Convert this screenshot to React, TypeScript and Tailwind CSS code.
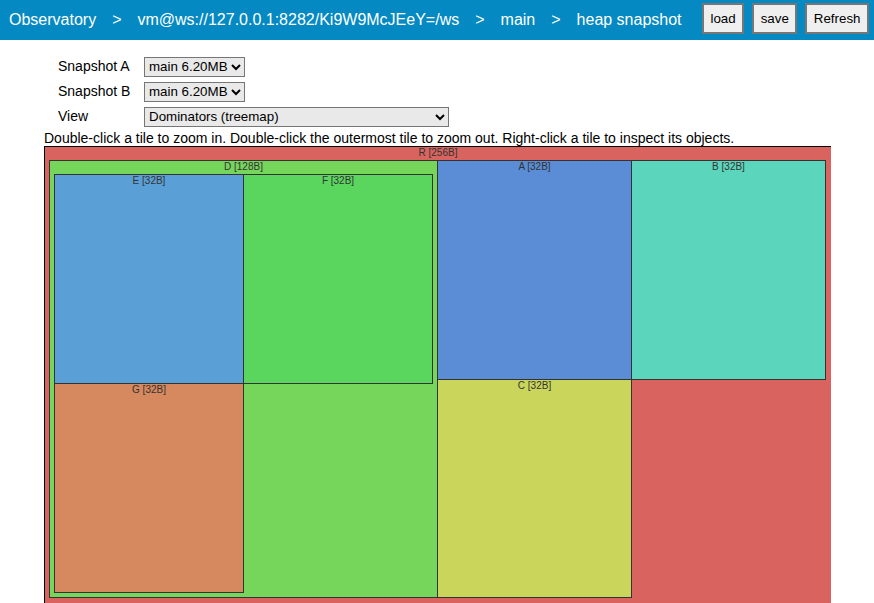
import React from 'react';

type Tile = { label: string; x: number; y: number; w: number; h: number; bg: string; root?: boolean };

// positions relative to the treemap canvas (page x 44, y 146)
const tiles: Tile[] = [
  { label: 'R [256B]', x: 0, y: 0, w: 787, h: 460, bg: 'bg-[#d9645f]', root: true },
  { label: 'D [128B]', x: 5, y: 14, w: 389, h: 438, bg: 'bg-[#76d55b]' },
  { label: 'E [32B]', x: 10, y: 28, w: 190, h: 210, bg: 'bg-[#5a9fd5]' },
  { label: 'F [32B]', x: 199, y: 28, w: 190, h: 210, bg: 'bg-[#5ad65f]' },
  { label: 'G [32B]', x: 10, y: 237, w: 190, h: 210, bg: 'bg-[#d6885e]' },
  { label: 'A [32B]', x: 393, y: 14, w: 195, h: 220, bg: 'bg-[#5b8dd6]' },
  { label: 'B [32B]', x: 587, y: 14, w: 195, h: 220, bg: 'bg-[#5bd5bb]' },
  { label: 'C [32B]', x: 393, y: 233, w: 195, h: 219, bg: 'bg-[#c9d65b]' },
];

const Crumb = ({ children }: { children: React.ReactNode }) => (
  <span className="px-2">{children}</span>
);

export default function App() {
  return (
    <div className="w-[874px] h-[603px] overflow-hidden bg-white text-black font-['Liberation_Sans',Arial,sans-serif]">
      {/* nav bar */}
      <div className="h-10 bg-[#0489c2] flex items-center justify-between pl-[1px] pr-[5px] text-white text-[16px]">
        <div className="flex items-center -mt-[1px]">
          <Crumb>Observatory</Crumb>
          <Crumb>&gt;</Crumb>
          <Crumb>vm@ws://127.0.0.1:8282/Ki9W9McJEeY=/ws</Crumb>
          <Crumb>&gt;</Crumb>
          <Crumb>main</Crumb>
          <Crumb>&gt;</Crumb>
          <Crumb>heap snapshot</Crumb>
        </div>
        <div className="flex items-center gap-2 -mt-[3px]">
          {['load', 'save', 'Refresh'].map((b) => (
            <button
              key={b}
              className="h-[31px] px-[6.5px] border-2 border-[#767676] bg-[#efefef] text-black text-[13.33px] leading-none"
            >
              {b}
            </button>
          ))}
        </div>
      </div>

      <div className="pl-[44px]">
        {/* snapshot form */}
        <div className="grid grid-cols-[86px_auto] auto-rows-[25px] items-center pl-[14px] pt-[14px] text-[14px]">
          <span>Snapshot A</span>
          <div>
            <select className="w-[101px] h-[20px] text-[13.33px] bg-[#e9e9e9] border border-[#767676] text-black">
              <option>main 6.20MB</option>
            </select>
          </div>
          <span>Snapshot B</span>
          <div>
            <select className="w-[101px] h-[20px] text-[13.33px] bg-[#e9e9e9] border border-[#767676] text-black">
              <option>main 6.20MB</option>
            </select>
          </div>
          <span>View</span>
          <div>
            <select className="w-[305px] h-[20px] text-[13.33px] bg-[#e9e9e9] border border-[#767676] text-black">
              <option>Dominators (treemap)</option>
            </select>
          </div>
        </div>

        <div className="text-[14px] leading-[16px] mt-[1px]">
          Double-click a tile to zoom in. Double-click the outermost tile to zoom out. Right-click a tile to inspect its objects.
        </div>

        {/* treemap */}
        <div className="relative w-[787px] h-[460px]">
          {tiles.map((t) => (
            <div
              key={t.label}
              className={`absolute ${t.bg} ${t.root ? 'border-l border-t border-black' : 'border border-[#333333]'}`}
              style={{ left: t.x, top: t.y, width: t.w, height: t.h }}
            >
              <div className="text-center text-[10px] leading-[12px] text-[#333333]">{t.label}</div>
            </div>
          ))}
        </div>
      </div>
    </div>
  );
}
